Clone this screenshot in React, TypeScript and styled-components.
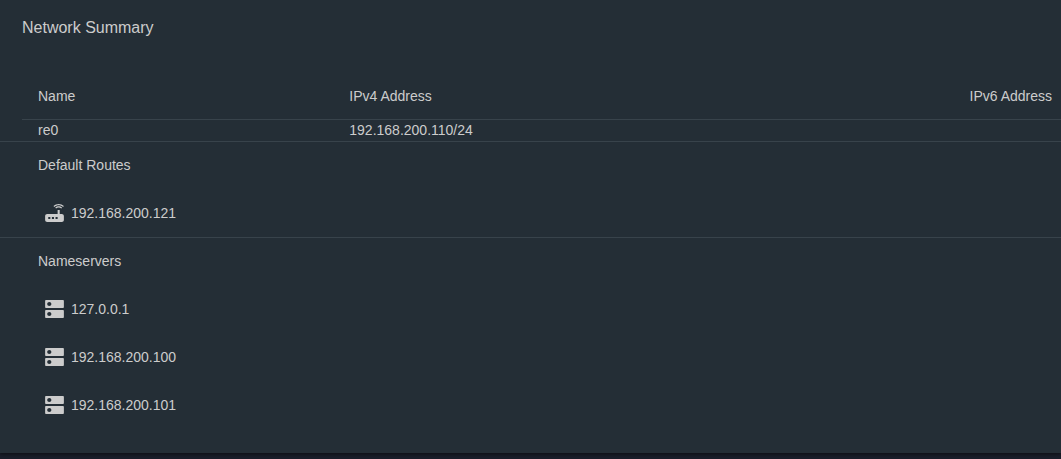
import React from "react";
import styled, { createGlobalStyle } from "styled-components";

const colors = {
  page: "#1a1e2a",
  card: "#242e36",
  line: "#38434b",
  text: "#cccccc",
};

const GlobalStyle = createGlobalStyle`
  * { box-sizing: border-box; }
  body {
    margin: 0;
    background: ${colors.page};
    color: ${colors.text};
    font: 14px/20px "Liberation Sans", Arial, sans-serif;
  }
`;

const Page = styled.main`
  padding-bottom: 6px;
  overflow: hidden;
`;

const Card = styled.section`
  padding: 16px 0 24px;
  background: ${colors.card};
  box-shadow: 0 2px 2px rgba(0, 0, 0, 0.2), 0 1px 5px rgba(0, 0, 0, 0.3);
`;

const Title = styled.h1`
  margin: 0 0 36px 22px;
  font-size: 16px;
  line-height: 24px;
  font-weight: 400;
`;

const TableArea = styled.div`
  padding-left: 22px;
`;

const Table = styled.table`
  width: 100%;
  table-layout: fixed;
  border-collapse: separate;
  border-spacing: 0;
`;

const HeadCell = styled.th<{ $width?: string }>`
  width: ${(p) => p.$width ?? "auto"};
  height: 44px;
  padding: 0 0 4px;
  border-bottom: 1px solid ${colors.line};
  font-weight: 400;
  text-align: left;
  white-space: nowrap;
  &:first-child { padding-left: 16px; }
`;

const Cell = styled.td`
  height: 21px;
  padding: 0;
  vertical-align: top;
  &:first-child { padding-left: 16px; }
`;

const Group = styled.section`
  border-top: 1px solid ${colors.line};
`;

const GroupTitle = styled.h2`
  margin: 0;
  padding-left: 38px;
  font-size: 14px;
  line-height: 47px;
  font-weight: 400;
`;

const List = styled.ul`
  margin: 0;
  padding: 0;
  list-style: none;
`;

const Item = styled.li`
  display: flex;
  align-items: center;
  gap: 4px;
  height: 48px;
  padding-left: 42px;
`;

const Icon = styled.svg`
  width: 25px;
  height: 24px;
  flex: none;
  fill: currentColor;
`;

const icons = {
  router:
    "M20.2 5.9l.8-.8C19.6 3.7 17.8 3 16 3s-3.6.7-5 2.1l.8.8C13 4.8 14.5 4.200 16 4.200s3 .6 4.200 1.700zm-.9.8c-.9-.9-2.100-1.400-3.300-1.400s-2.400.5-3.300 1.400l.8.8c.7-.7 1.600-1 2.500-1 .9 0 1.800.3 2.500 1l.8-.8zM19 13h-2V9h-2v4H5c-1.100 0-2 .9-2 2v4c0 1.100.9 2 2 2h14c1.100 0 2-.9 2-2v-4c0-1.100-.9-2-2-2zM8 18H6v-2h2v2zm3.500 0h-2v-2h2v2zm3.500 0h-2v-2h2v2z",
  dns: "M20 13H4c-.55 0-1 .45-1 1v6c0 .55.45 1 1 1h16c.55 0 1-.45 1-1v-6c0-.55-.45-1-1-1zM7 19c-1.100 0-2-.9-2-2s.9-2 2-2 2 .9 2 2-.9 2-2 2zM20 3H4c-.55 0-1 .45-1 1v6c0 .55.45 1 1 1h16c.55 0 1-.45 1-1V4c0-.55-.45-1-1-1zM7 9c-1.100 0-2-.9-2-2s.9-2 2-2 2 .9 2 2-.9 2-2 2z",
};

type AddressGroupProps = {
  title: string;
  icon: keyof typeof icons;
  addresses: string[];
};

function AddressGroup({ title, icon, addresses }: AddressGroupProps) {
  return (
    <Group>
      <GroupTitle>{title}</GroupTitle>
      <List>
        {addresses.map((address) => (
          <Item key={address}>
            <Icon viewBox="0 0 24 24" preserveAspectRatio="none" aria-hidden="true">
              <path d={icons[icon]} />
            </Icon>
            <span>{address}</span>
          </Item>
        ))}
      </List>
    </Group>
  );
}

export default function App() {
  return (
    <Page>
      <GlobalStyle />
      <Card>
        <Title>Network Summary</Title>
        <TableArea>
          <Table>
            <thead>
              <tr>
                <HeadCell $width="31.5%">Name</HeadCell>
                <HeadCell $width="59.7%">IPv4 Address</HeadCell>
                <HeadCell>IPv6 Address</HeadCell>
              </tr>
            </thead>
            <tbody>
              <tr>
                <Cell>re0</Cell>
                <Cell>192.168.200.110/24</Cell>
                <Cell />
              </tr>
            </tbody>
          </Table>
        </TableArea>
        <AddressGroup title="Default Routes" icon="router" addresses={["192.168.200.121"]} />
        <AddressGroup
          title="Nameservers"
          icon="dns"
          addresses={["127.0.0.1", "192.168.200.100", "192.168.200.101"]}
        />
      </Card>
    </Page>
  );
}
